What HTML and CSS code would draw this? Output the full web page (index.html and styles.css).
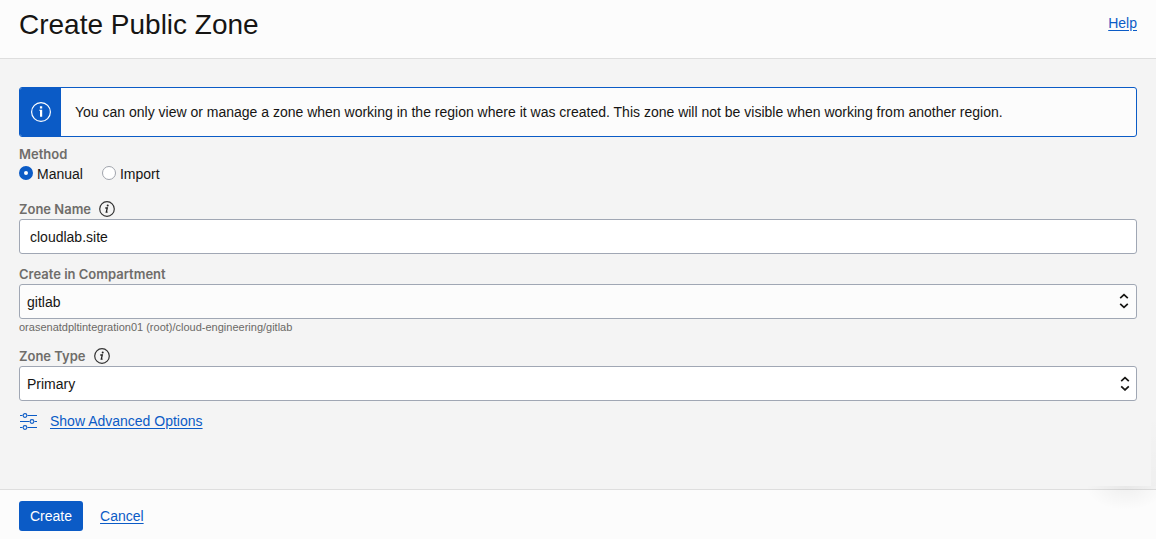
FILE: index.html
```html
<!DOCTYPE html>
<html lang="en">
<head>
<meta charset="utf-8">
<title>Create Public Zone</title>
<meta name="viewport" content="width=device-width, initial-scale=1">
<link rel="stylesheet" href="styles.css">
</head>
<body>
<header class="header">
  <h1 class="title">Create Public Zone</h1>
  <a class="link" href="#help">Help</a>
</header>
<form class="form">
  <main class="content">
    <div class="notice">
      <div class="notice-icon">
        <svg width="22" height="22" viewBox="0 0 22 22" fill="none" aria-hidden="true">
          <circle cx="11" cy="11" r="9.4" stroke="#fff" stroke-width="1.2"/>
          <path d="M9.300 8.700H12.200V15.700H10V9.700H9.300Z" fill="#fff"/>
          <path d="M9.900 5.300h2.300v2.100H9.900Z" fill="#fff"/>
        </svg>
      </div>
      <p class="notice-text">You can only view or manage a zone when working in the region where it was created. This zone will not be visible when working from another region.</p>
    </div>

    <fieldset class="methods">
      <legend class="label">Method</legend>
      <div class="radios">
        <label class="choice"><input class="radio" type="radio" name="method" checked>Manual</label>
        <label class="choice"><input class="radio" type="radio" name="method">Import</label>
      </div>
    </fieldset>

    <div class="field">
      <div class="label-row">
        <label class="label" for="zone-name">Zone Name</label>
        <svg width="16" height="16" viewBox="0 0 16 16" fill="none" aria-hidden="true">
          <circle cx="8" cy="8" r="7.3" stroke="#333" stroke-width="1.2"/>
          <path d="M6.3 7h2l-1 4.100h1.300" stroke="#222" stroke-width="1.300"/>
          <circle cx="8.7" cy="4.6" r="1" fill="#222"/>
        </svg>
      </div>
      <input class="control text" id="zone-name" type="text" value="cloudlab.site">
    </div>

    <div class="field">
      <div class="label-row"><label class="label" for="compartment">Create in Compartment</label></div>
      <div class="select-box">
        <select class="control soft" id="compartment"><option>gitlab</option></select>
        <svg class="arrows" width="10" height="16" viewBox="0 0 10 16" fill="none" stroke="#161513" stroke-width="1.7" aria-hidden="true"><path d="M1.200 5.200L5 1.600l3.800 3.600M1.200 10.800L5 14.400l3.800-3.600"/></svg>
      </div>
      <p class="hint">orasenatdpltintegration01 (root)/cloud-engineering/gitlab</p>
    </div>

    <div class="field">
      <div class="label-row">
        <label class="label" for="zone-type">Zone Type</label>
        <svg width="16" height="16" viewBox="0 0 16 16" fill="none" aria-hidden="true">
          <circle cx="8" cy="8" r="7.3" stroke="#333" stroke-width="1.2"/>
          <path d="M6.3 7h2l-1 4.100h1.300" stroke="#222" stroke-width="1.300"/>
          <circle cx="8.7" cy="4.6" r="1" fill="#222"/>
        </svg>
      </div>
      <div class="select-box">
        <select class="control" id="zone-type"><option>Primary</option></select>
        <svg class="arrows" width="10" height="16" viewBox="0 0 10 16" fill="none" stroke="#161513" stroke-width="1.7" aria-hidden="true"><path d="M1.200 6.200L5 2.600l3.800 3.600M1.200 11.300L5 14.900l3.800-3.600"/></svg>
      </div>
    </div>

    <div class="advanced">
      <svg width="18" height="18" viewBox="0 0 18 18" fill="none" stroke="#0b5bc6" stroke-width="1.1" aria-hidden="true">
        <path d="M1 3.500h2.500M8.500 3.500H18M1 9.500h9.500M15.500 9.500H18M1 15.500h2.500M8.500 15.500H18"/>
        <circle cx="6" cy="3.500" r="1.900"/><circle cx="13" cy="9.500" r="1.900"/><circle cx="6" cy="15.500" r="1.900"/>
      </svg>
      <a class="link" href="#advanced">Show Advanced Options</a>
    </div>
  </main>
  <footer class="footer">
    <button class="create" type="button">Create</button>
    <a class="link" href="#cancel">Cancel</a>
  </footer>
</form>
<div class="edge-shadow" aria-hidden="true"></div>
</body>
</html>
```
FILE: styles.css
```css
* {
  box-sizing: border-box;
}

body {
  position: relative;
  display: flex;
  flex-direction: column;
  min-height: 100vh;
  margin: 0;
  background: #f4f4f4;
  color: #161513;
  font: 14px/20px "Liberation Sans", Arial, sans-serif;
}

.header {
  display: flex;
  justify-content: space-between;
  padding: 5px 19px 13px;
  background: #fcfcfc;
  border-bottom: 1px solid #dedede;
}

.header .link {
  margin-top: 8px;
}

.title {
  margin: 0;
  font-size: 28px;
  font-weight: 400;
  line-height: 40px;
}

.link {
  color: #0b5bc6;
  text-decoration: underline;
  text-underline-offset: 2px;
}

.form {
  display: flex;
  flex: 1;
  flex-direction: column;
}

.content {
  flex: 1;
  padding: 28px 19px 20px;
}

.notice {
  display: flex;
  min-height: 50px;
  overflow: hidden;
  background: #fcfcfc;
  border: 1px solid #0b5bc6;
  border-radius: 3px;
}

.notice-icon {
  display: flex;
  flex: none;
  align-items: center;
  justify-content: center;
  width: 41px;
  background: #0b5bc6;
}

.notice-text {
  align-self: center;
  margin: 0;
  padding: 4px 14px;
}

.methods {
  margin: 7px 0 15px;
  padding: 0;
  border: 0;
}

.label {
  padding: 0;
  color: #6f6d6a;
  font-family: Inter, "Liberation Sans", sans-serif;
  font-size: 13px;
  font-weight: 600;
}

.radios {
  display: flex;
  gap: 19px;
}

.choice {
  display: flex;
  align-items: center;
  gap: 4px;
}

.radio {
  width: 14px;
  height: 14px;
  margin: 0 0 2px;
  appearance: none;
  background: #fff;
  border: 1px solid #a0a4ac;
  border-radius: 50%;
}

.radio:checked {
  border: 5px solid #0b5bc6;
}

.field {
  margin-bottom: 10px;
}

.label-row {
  display: flex;
  align-items: center;
  gap: 8px;
  height: 20px;
}

.control {
  display: block;
  width: 100%;
  height: 35px;
  padding: 0 32px 0 7px;
  appearance: none;
  background: #fff;
  border: 1px solid #a0a7b4;
  border-radius: 3px;
  color: #161513;
  font: inherit;
}

.control.text {
  padding: 0 10px;
}

.control.soft {
  background: #fcfcfc;
}

.select-box {
  position: relative;
}

.arrows {
  position: absolute;
  top: 9px;
  right: 7px;
  pointer-events: none;
}

.soft + .arrows {
  right: 8px;
}

.hint {
  margin: 0;
  color: #6b6966;
  font-size: 11px;
  line-height: 17px;
}

.advanced {
  display: flex;
  align-items: center;
  gap: 13px;
}

.footer {
  display: flex;
  align-items: center;
  gap: 17px;
  padding: 11px 19px 8px;
  background: #fcfcfc;
  border-top: 1px solid #dedede;
}

.create {
  height: 30px;
  padding: 0 11px;
  background: #0b5bc6;
  border: 0;
  border-radius: 3px;
  color: #fff;
  font: inherit;
}

.edge-shadow {
  position: absolute;
  right: 0;
  bottom: 25px;
  width: 76px;
  height: 100px;
  pointer-events: none;
  background:
    radial-gradient(ellipse 40px 24px at 46px 0, rgba(0, 0, 0, .05), transparent) 0 72px / 76px 28px no-repeat,
    linear-gradient(transparent, rgba(0, 0, 0, .02)) 71px 0 / 5px 72px no-repeat;
}
```
